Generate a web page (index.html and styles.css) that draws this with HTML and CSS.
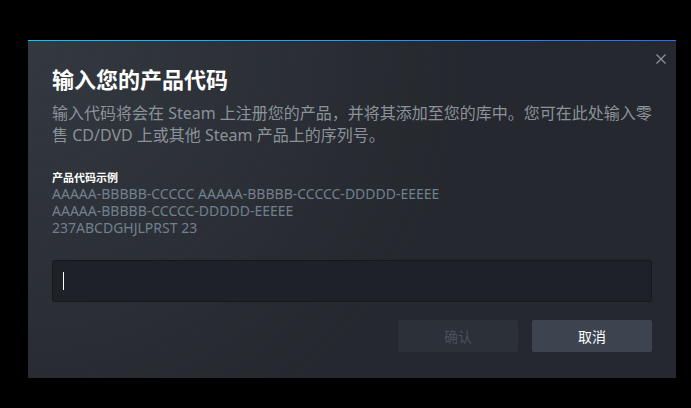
FILE: index.html
```html
<!DOCTYPE html>
<html lang="zh-CN">
<head>
<meta charset="utf-8">
<title>输入您的产品代码</title>
<link rel="stylesheet" href="styles.css">
</head>
<body>
<div class="dialog">
  <button class="close" aria-label="关闭">
    <svg viewBox="0 0 10 10" width="10" height="10"><path d="M0.5 0.5 L9.5 9.5 M9.5 0.5 L0.5 9.5" stroke="currentColor" stroke-width="1.3" fill="none"/></svg>
  </button>
  <div class="body">
    <h1 class="title">输入您的产品代码</h1>
    <p class="desc">输入代码将会在 Steam 上注册您的产品，并将其添加至您的库中。您可在此处输入零售 CD/DVD 上或其他 Steam 产品上的序列号。</p>
    <div class="examples">
      <div class="ex-label">产品代码示例</div>
      <div class="ex-code">AAAAA-BBBBB-CCCCC AAAAA-BBBBB-CCCCC-DDDDD-EEEEE</div>
      <div class="ex-code">AAAAA-BBBBB-CCCCC-DDDDD-EEEEE</div>
      <div class="ex-code">237ABCDGHJLPRST 23</div>
    </div>
    <div class="field"><span class="caret"></span></div>
    <div class="actions">
      <button class="btn btn-disabled">确认</button>
      <button class="btn btn-cancel">取消</button>
    </div>
  </div>
</div>
</body>
</html>
```

FILE: styles.css
```css
html, body {
  margin: 0;
  padding: 0;
  background: #000;
}
body {
  font-family: "Noto Sans", "Noto Sans CJK SC", sans-serif;
}
.dialog {
  position: relative;
  margin: 40px 0 0 28px;
  width: 648px;
  height: 338px;
  box-sizing: border-box;
  border-top: 1px solid #1a9fff;
  border-image: linear-gradient(to right, #00ccff, #1a9fff 50%, #2d6bff) 1;
  background: radial-gradient(circle at top left, rgba(74, 81, 92, 0.4) 0%, rgba(75, 81, 92, 0) 60%), #25282e;
}
.close {
  position: absolute;
  top: 13px;
  right: 10px;
  width: 10px;
  height: 10px;
  padding: 0;
  border: 0;
  background: none;
  color: #8b929a;
  display: flex;
}
.body {
  padding: 24px 24px 26px;
  display: flex;
  flex-direction: column;
}
.title {
  margin: 0;
  font-family: "Noto Sans", "Noto Sans CJK SC", sans-serif;
  font-size: 22px;
  line-height: 28px;
  font-weight: 700;
  color: #ffffff;
}
.desc {
  margin: 9px -8px 0 0;
  font-size: 16px;
  line-height: 22px;
  color: #8b929a;
}
.examples {
  margin-top: 25px;
}
.ex-label {
  font-size: 11px;
  line-height: 14px;
  font-weight: 700;
  color: #ffffff;
}
.ex-code {
  font-size: 14px;
  line-height: 17px;
  letter-spacing: 0;
  color: #71808f;
}
.field {
  margin-top: 24px;
  height: 42px;
  border-radius: 3px;
  background: #1e2127;
  box-shadow: inset 0 0 0 1px rgba(0, 0, 0, 0.25);
  display: flex;
  align-items: center;
  padding-left: 11px;
}
.caret {
  width: 1px;
  height: 18px;
  background: #ffffff;
}
.actions {
  margin-top: 18px;
  display: flex;
  justify-content: flex-end;
  gap: 14px;
}
.btn {
  width: 120px;
  height: 32px;
  border: 0;
  border-radius: 2px;
  padding: 0;
  font-family: "Noto Sans", "Noto Sans CJK SC", sans-serif;
  font-size: 14px;
}
.btn-disabled {
  background: #2c3038;
  color: #4b525c;
}
.btn-cancel {
  background: #3d4450;
  color: #ffffff;
}
```
